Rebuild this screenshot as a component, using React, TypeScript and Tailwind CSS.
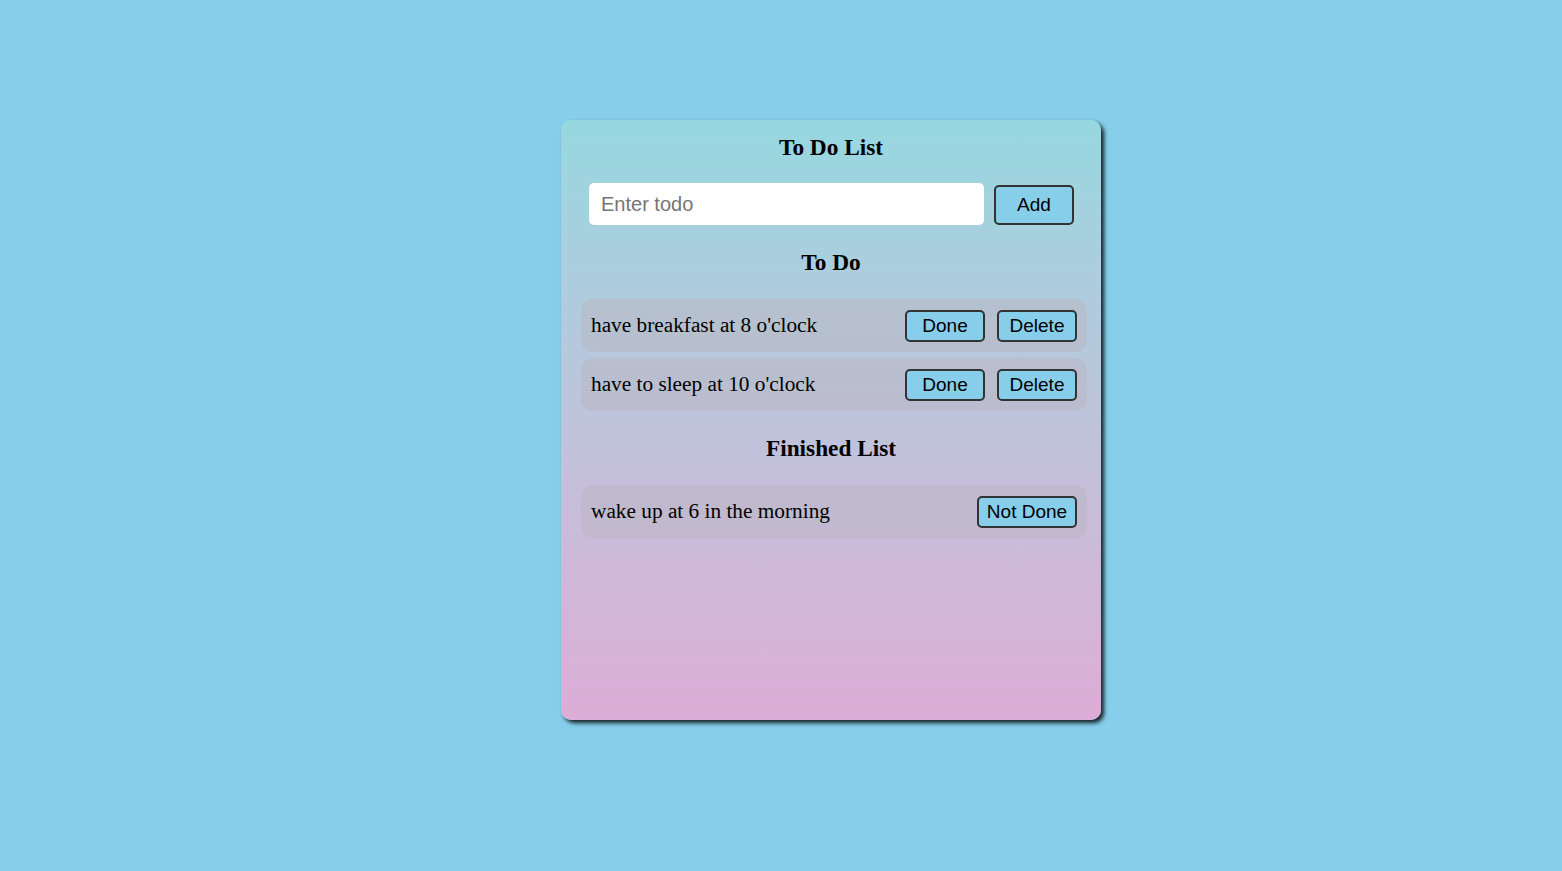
import React from "react";

const btn =
  "h-[32px] bg-[#87ceeb] border-2 border-[#333] rounded-[5px] text-[19px] leading-none text-black font-['Liberation_Sans',Arial,sans-serif]";

function Row({ text, done }: { text: string; done?: boolean }) {
  return (
    <div className="h-[53px] rounded-[12px] bg-[rgba(185,182,192,0.5)] flex items-center pl-[10px] pr-[10px]">
      <span className="flex-1 text-[21.3px] text-black font-['Liberation_Serif','Times_New_Roman',serif]">{text}</span>
      {done ? (
        <button className={`${btn} w-[100px] h-[31px]`}>Not Done</button>
      ) : (
        <div className="flex gap-[12px]">
          <button className={`${btn} w-[80px]`}>Done</button>
          <button className={`${btn} w-[80px]`}>Delete</button>
        </div>
      )}
    </div>
  );
}

export default function App() {
  return (
    <div className="min-h-[871px] w-full bg-[#87ceeb] pt-[120px] pl-[561px]">
      <div className="w-[540px] h-[600px] rounded-[10px] bg-gradient-to-b from-[#96d8e0] to-[#dcadd8] shadow-[3px_3px_4px_rgba(0,0,0,0.85)] pl-[20px] pr-[14px] pt-[13px] font-['Liberation_Serif','Times_New_Roman',serif]">
        <h2 className="text-center text-[23.3px] font-bold leading-[28px] text-black pr-[6px]">To Do List</h2>
        <div className="flex items-center mt-[22px] ml-[8px] gap-[10px]">
          <input
            placeholder="Enter todo"
            className="w-[395px] h-[42px] bg-white rounded-[5px] px-[12px] text-[20px] outline-none placeholder:text-[#757575] font-['Liberation_Sans',Arial,sans-serif]"
          />
          <button className="w-[80px] h-[40px] mt-[2px] bg-[#87ceeb] border-2 border-[#333] rounded-[5px] text-[19px] font-['Liberation_Sans',Arial,sans-serif]">
            Add
          </button>
        </div>
        <h2 className="text-center text-[23.3px] font-bold leading-[28px] text-black mt-[23px] pr-[6px]">To Do</h2>
        <div className="flex flex-col gap-[6px] mt-[23px]">
          <Row text="have breakfast at 8 o'clock" />
          <Row text="have to sleep at 10 o'clock" />
        </div>
        <h2 className="text-center text-[23.3px] font-bold leading-[28px] text-black mt-[23px] pr-[6px]">Finished List</h2>
        <div className="flex flex-col gap-[6px] mt-[23px]">
          <Row text="wake up at 6 in the morning" done />
        </div>
      </div>
    </div>
  );
}
